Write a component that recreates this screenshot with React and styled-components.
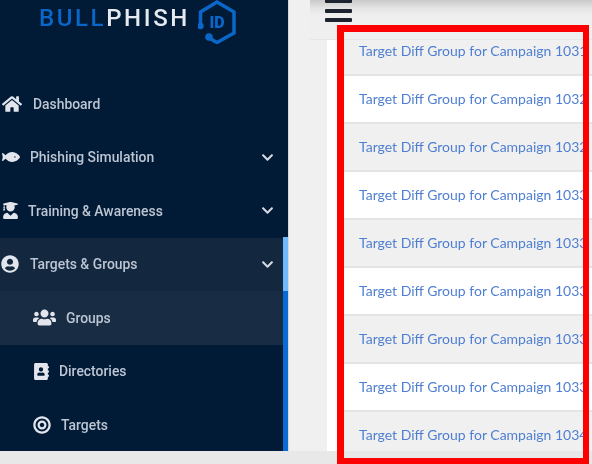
import React from 'react';
import styled, { createGlobalStyle } from 'styled-components';
import { FaHome, FaFish, FaUserGraduate, FaUserCircle, FaUsers, FaAddressBook, FaBullseye, FaChevronDown } from 'react-icons/fa';

const Global = createGlobalStyle`
    html, body { margin:0; padding:0; background:#f0f0f0; }
    #root { width:592px; height:464px; overflow:hidden; }
`

const Page = styled.div`
    position:relative;
    display:flex;
    flex-direction:column;
    width:592px;
    height:464px;
    overflow:hidden;
    font-family:Roboto, "Liberation Sans", sans-serif;
`
const Body = styled.div`
    display:grid;
    grid-template-columns:289px 1fr;
    height:451px;
`
const BottomBar = styled.div`
    flex:1;
    background:#e8e8e8;
`
const Sidebar = styled.aside`
    position:relative;
    background:#011a35;
    border-right:1px solid #d8d8d8;
    overflow:hidden;
`
const LogoRow = styled.div`
    display:flex;
    align-items:flex-start;
    height:77px;
    padding-left:39px;
    box-sizing:border-box;
    filter:blur(0.4px);
`
const LogoText = styled.div`
    font-size:24px;
    font-weight:500;
    letter-spacing:2.6px;
    line-height:26px;
    margin-top:5px;
    color:#e6e9ee;
    width:159px;
    white-space:nowrap;
    span { color:#0a66c8; }
`
const LogoMark = styled.svg`
    width:40px;
    height:44px;
    flex:none;
`
const Scrollbar = styled.div`
    position:absolute;
    right:0;
    top:237px;
    bottom:0;
    width:5px;
    background:linear-gradient(#6fbafc 0 54px, #0a6bd6 54px);
`
const Item = styled.div`
    display:flex;
    align-items:center;
    height:53.5px;
    padding-left:${p => p.$indent}px;
    padding-right:14px;
    box-sizing:border-box;
    background:${p => p.$bg || 'transparent'};
    color:#bcc5d3;
`
const IconSlot = styled.span`
    display:flex;
    align-items:center;
    width:${p => p.$slot}px;
    color:#e2e6ec;
    flex:none;
    filter:blur(0.4px);
`
const Label = styled.span`
    flex:1;
    font-size:13.9px;
    font-weight:500;
    white-space:nowrap;
    filter:blur(0.4px);
`
const Chevron = styled(FaChevronDown)`
    color:#d5dae2;
    font-size:13px;
`
const Main = styled.main`
    display:flex;
    flex-direction:column;
    min-width:0;
    height:451px;
    overflow:hidden;
    background:#f0f0f0;
`
const Header = styled.header`
    flex:none;
    height:40px;
    margin-left:21px;
    border-bottom:1px solid #e6e6e6;
    box-sizing:border-box;
    padding-left:15px;
    background:linear-gradient(#c9c9c9 0, #e4e4e4 8px, #efefef 16px);
`
const Burger = styled.div`
    display:flex;
    flex-direction:column;
    gap:5.5px;
    width:27px;
    margin-top:-1px;
    i {
        display:block;
        height:4px;
        border-radius:1px;
        background:#1d2430;
    }
`
const Panel = styled.section`
    flex:1;
    margin-left:38px;
    background:#fff;
    padding-left:10px;
    overflow:hidden;
`
const List = styled.div`
    margin-top:-12px;
    filter:blur(0.4px);
`
const Row = styled.div`
    display:flex;
    align-items:center;
    height:48px;
    box-sizing:border-box;
    padding-left:22px;
    padding-bottom:2px;
    border-bottom:2px solid #e4e4e4;
    background:${p => (p.$odd ? '#f0f0f0' : '#fff')};
    font-family:Lato, "Open Sans", sans-serif;
    font-size:14px;
    color:#4f7fd2;
    white-space:nowrap;
    overflow:hidden;
`
const Highlight = styled.div`
    position:absolute;
    left:337px;
    top:25px;
    width:252px;
    height:439px;
    box-sizing:border-box;
    border-style:solid;
    border-color:#fe0000;
    border-width:7px 6px 6px 7px;
    pointer-events:none;
`

const menu = [
    { label: 'Dashboard', icon: <FaHome size={20} />, indent: 2, slot: 31 },
    { label: 'Phishing Simulation', icon: <FaFish size={18} />, indent: 2, slot: 28, more: true },
    { label: 'Training & Awareness', icon: <FaUserGraduate size={17} />, indent: 2, slot: 26, more: true },
    { label: 'Targets & Groups', icon: <FaUserCircle size={18} />, indent: 1, slot: 29, more: true, bg: '#13273f' },
    { label: 'Groups', icon: <FaUsers size={23} />, indent: 33, slot: 33, bg: '#182c44' },
    { label: 'Directories', icon: <FaAddressBook size={17} />, indent: 33, slot: 26 },
    { label: 'Targets', icon: <FaBullseye size={18} />, indent: 33, slot: 28 },
]

const groups = ['1031', '1032', '1032', '1033', '1033', '1033', '1033', '1033', '1034']

const App = () => {
    return (
        <Page>
            <Global />
            <Body>
                <Sidebar>
                    <LogoRow>
                        <LogoText><span>BULL</span>PHISH</LogoText>
                        <LogoMark viewBox="0 0 40 44">
                            <path d="M2.5 25 V12 L19 2 L36 12 V33 L19 42.5 L12 38.5" fill="none" stroke="#0a66c8" strokeWidth="3.5" />
                            <circle cx="2.5" cy="26" r="3.2" fill="#0a66c8" />
                            <circle cx="11" cy="37" r="3.8" fill="#0a66c8" />
                            <text x="19" y="28" textAnchor="middle" fontFamily="Roboto, sans-serif" fontWeight="900" fontSize="16" fill="#0a66c8">ID</text>
                        </LogoMark>
                    </LogoRow>
                    {menu.map(m => (
                        <Item key={m.label} $indent={m.indent} $bg={m.bg}>
                            <IconSlot $slot={m.slot}>{m.icon}</IconSlot>
                            <Label>{m.label}</Label>
                            {m.more && <Chevron />}
                        </Item>
                    ))}
                    <Scrollbar />
                </Sidebar>
                <Main>
                    <Header>
                        <Burger><i /><i /><i /></Burger>
                    </Header>
                    <Panel>
                        <List>
                            {groups.map((g, i) => (
                                <Row key={i} $odd={i % 2 === 0}>Target Diff Group for Campaign {g}</Row>
                            ))}
                        </List>
                    </Panel>
                </Main>
            </Body>
            <BottomBar />
            <Highlight />
        </Page>
    )
}

export default App
